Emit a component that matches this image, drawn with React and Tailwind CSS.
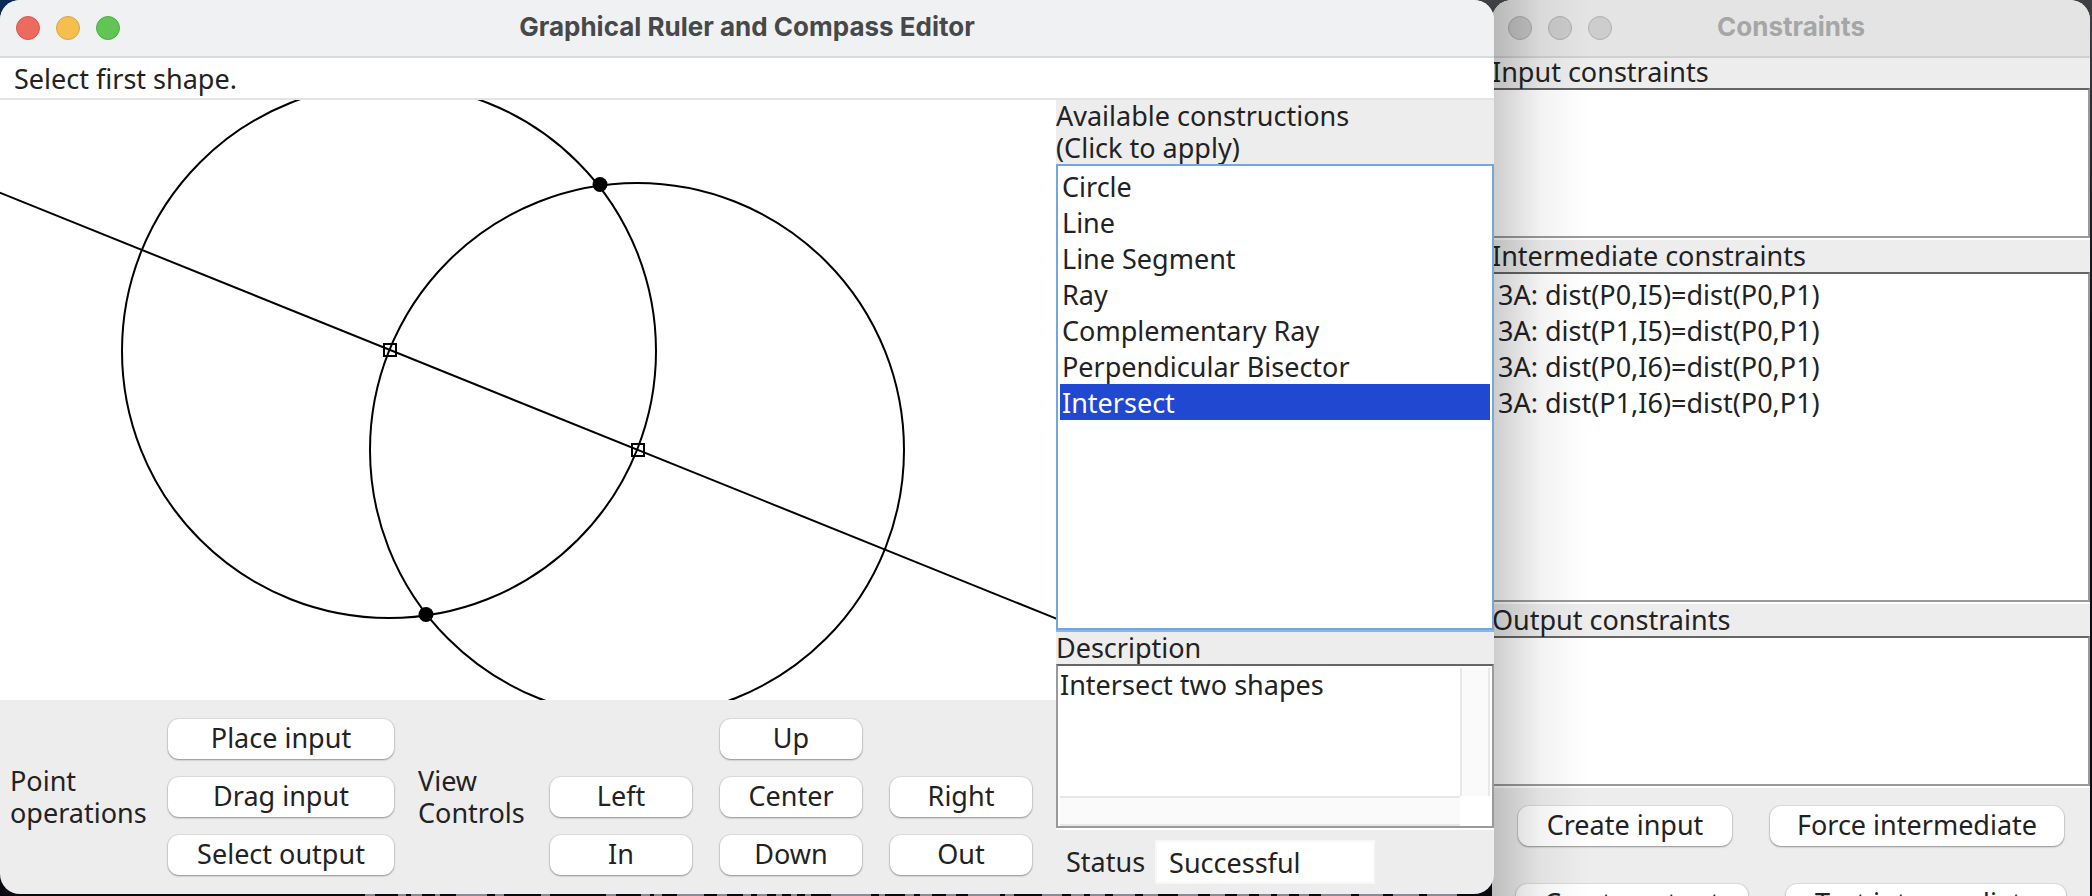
import { useState } from "react";

const constructions = [
  ["Circle", "Circle from center and point"],
  ["Line", "Line through two points"],
  ["Line Segment", "Segment between two points"],
  ["Ray", "Ray from a point"],
  ["Complementary Ray", "Complement of a ray"],
  ["Perpendicular Bisector", "Bisector of two points"],
  ["Intersect", "Intersect two shapes"],
];

const intermediate = [
  "3A: dist(P0,I5)=dist(P0,P1)",
  "3A: dist(P1,I5)=dist(P0,P1)",
  "3A: dist(P0,I6)=dist(P0,P1)",
  "3A: dist(P1,I6)=dist(P0,P1)",
];

function Button({ children, className = "" }) {
  return (
    <button
      type="button"
      className={`h-10 rounded-[11px] bg-white pb-0.5 leading-8 whitespace-nowrap shadow-[0_0_1px_1px_rgba(0,0,0,0.07),0_1px_2px_rgba(0,0,0,0.35)] ${className}`}
    >
      {children}
    </button>
  );
}

function TitleBar({ title, active }) {
  const lights = active
    ? ["bg-[#ec6a5e] border-[#d5574c]", "bg-[#f4bf4f] border-[#d9a441]", "bg-[#61c554] border-[#52ab45]"]
    : ["bg-[#c6c6c6] border-[#a9a9a9]", "bg-[#cbcbcb] border-[#adadad]", "bg-[#cdcdcd] border-[#b0b0b0]"];
  return (
    <header
      className={`relative flex h-[58px] shrink-0 items-center gap-4 border-b-2 px-4 ${
        active ? "border-[#d9dadb] bg-[#eff1f3]" : "border-[#d0d0d0] bg-[#e4e4e4]"
      }`}
    >
      {lights.map((c) => (
        <span key={c} className={`size-6 rounded-full border ${c}`} />
      ))}
      <h1
        className={`pointer-events-none absolute inset-x-0 pb-0.5 text-center font-['Inter',sans-serif] text-[26px] leading-8 font-bold ${
          active ? "text-[#47484a]" : "text-[#a6a6a6]"
        }`}
      >
        {title}
      </h1>
    </header>
  );
}

function Canvas() {
  return (
    <svg className="block h-[600px] w-full bg-white" role="img" aria-label="Construction canvas">
      <g transform="translate(0 -100)" fill="none" stroke="#000" strokeWidth="2">
        <circle cx="389" cy="351" r="267" />
        <circle cx="637" cy="450" r="267" />
        <path d="M-248 92.7L1878 950" />
        <rect x="384" y="344" width="12" height="12" />
        <rect x="632" y="444" width="12" height="12" />
        <circle cx="600" cy="184.500" r="7.500" fill="#000" stroke="none" />
        <circle cx="426" cy="614.500" r="7.500" fill="#000" stroke="none" />
      </g>
    </svg>
  );
}

function ConstraintBox({ label, items = [], className }) {
  return (
    <section>
      <h2>{label}</h2>
      <ul className={`border-2 border-[#9a9a9a] border-t-[#666] bg-white px-0.5 py-0.5 ${className}`}>
        {items.map((t) => (
          <li key={t} className="px-0.5 pt-px leading-[35px] whitespace-nowrap">
            {t}
          </li>
        ))}
      </ul>
      <div className="h-0.5 bg-white" />
    </section>
  );
}

function Editor() {
  const [selected, setSelected] = useState(6);
  return (
    <main className="relative z-10 flex h-[894px] min-w-0 flex-1 flex-col overflow-hidden rounded-[20px] bg-[#ededed]">
      <TitleBar title="Graphical Ruler and Compass Editor" active />
      <input
        readOnly
        aria-label="Message"
        value="Select first shape."
        className="h-[42px] shrink-0 border-b-2 border-[#e4e4e4] bg-white px-3.5 outline-none"
      />
      <div className="flex flex-1">
        <div className="min-w-0 flex-1">
          <Canvas />
          <div className="flex h-[194px] items-center pl-2.5">
            <p className="w-[158px]">
              Point
              <br />
              operations
            </p>
            <div className="flex w-[226px] flex-col gap-[18px]">
              <Button>Place input</Button>
              <Button>Drag input</Button>
              <Button>Select output</Button>
            </div>
            <p className="w-[156px] pl-6">
              View
              <br />
              Controls
            </p>
            <div className="grid grid-cols-[142px_142px_142px] gap-x-7 gap-y-[18px]">
              <Button className="col-start-2">Up</Button>
              <Button className="col-start-1">Left</Button>
              <Button>Center</Button>
              <Button>Right</Button>
              <Button>In</Button>
              <Button>Down</Button>
              <Button>Out</Button>
            </div>
          </div>
        </div>
        <aside className="flex w-[438px] shrink-0 flex-col">
          <h2>
            Available constructions
            <br />
            (Click to apply)
          </h2>
          <div
            role="listbox"
            aria-label="Available constructions"
            className="h-[466px] border-2 border-[#74a7dc] bg-white p-0.5"
          >
            {constructions.map(([name], i) => (
              <button
                key={name}
                type="button"
                role="option"
                aria-selected={i === selected}
                onClick={() => setSelected(i)}
                className={`block h-9 w-full px-0.5 pt-px text-left ${i === selected ? "bg-[#2048d0] text-white" : ""}`}
              >
                {name}
              </button>
            ))}
          </div>
          <div className="h-0.5 bg-[#83b8f3]" />
          <label htmlFor="description">Description</label>
          <div className="grid h-[164px] grid-cols-[1fr_30px] grid-rows-[1fr_30px] border-2 border-[#9a9a9a] border-t-[#666] bg-white px-0.5 pt-0.5">
            <textarea
              id="description"
              readOnly
              value={constructions[selected][1]}
              className="resize-none overflow-hidden bg-white pt-px outline-none"
            />
            <div className="border-x-2 border-[#e8e8e8] bg-[#fafafa]" />
            <div className="border-y-2 border-[#e8e8e8] bg-[#fafafa]" />
          </div>
          <div className="h-0.5 bg-white" />
          <div className="flex flex-1 items-center gap-2.5 pl-2.5">
            <label htmlFor="status">Status</label>
            <input
              id="status"
              readOnly
              value="Successful"
              className="h-11 w-[220px] border-2 border-[#f8f8f8] bg-white px-3 outline-none"
            />
          </div>
        </aside>
      </div>
    </main>
  );
}

function Constraints() {
  return (
    <aside className="relative -ml-0.5 flex h-[960px] w-[598px] shrink-0 flex-col overflow-hidden rounded-[20px] bg-[#ededed]">
      <TitleBar title="Constraints" />
      <div className="-mt-0.5 flex flex-col">
        <ConstraintBox label="Input constraints" className="h-[150px]" />
        <ConstraintBox label="Intermediate constraints" items={intermediate} className="h-[330px]" />
        <ConstraintBox label="Output constraints" className="h-[150px]" />
      </div>
      <div className="flex flex-col gap-[38px] px-6 pt-[18px]">
        <div className="flex justify-between pr-0.5 pl-0.5">
          <Button className="w-[214px]">Create input</Button>
          <Button className="w-[294px]">Force intermediate</Button>
        </div>
        <div className="flex justify-between">
          <Button className="w-[232px]">Create output</Button>
          <Button className="w-[280px]">Test intermediate</Button>
        </div>
      </div>
      <div className="pointer-events-none absolute inset-y-0 left-0 w-24 bg-linear-to-r from-black/20 via-black/5 to-transparent" />
    </aside>
  );
}

function Desktop() {
  return (
    <div aria-hidden="true" className="absolute inset-0 bg-linear-to-b from-[#3f4044] to-[#0d0910] to-40%">
      <div className="absolute top-0 left-0 size-5 bg-[#0b2a57]" />
      <svg className="absolute bottom-0 left-0 h-4 w-full">
        <path
          d="M365 15h10m23 0h8m5 0h11m18 0h-5m21 0h31m8 0h9m37 0h9m56 0h10m25 0h9m4 0h8m15 0h27m13 0h10m16 0h8m6 0h10m9 0h6m9 0h6m8 0h6m20 0h40m8 0h6m20 0h9m6 0h12m14 0h10m12 0h32m5 0h9m28 0h20m9 0h13m6 0h15m8 0h22m8 0h15m20 0h20m12 0h15m12 0h12m10 0h12m6 0h12m10 0h10m12 0h30m8 0h24m10 0h26m8 0h30"
          stroke="#8d8a94"
          strokeWidth="2"
        />
      </svg>
    </div>
  );
}

export default function App() {
  return (
    <div className="relative flex h-screen items-start overflow-hidden pr-0.5 font-['Noto_Sans',sans-serif] text-[27px] leading-8 text-[#222]">
      <Desktop />
      <Editor />
      <Constraints />
    </div>
  );
}
